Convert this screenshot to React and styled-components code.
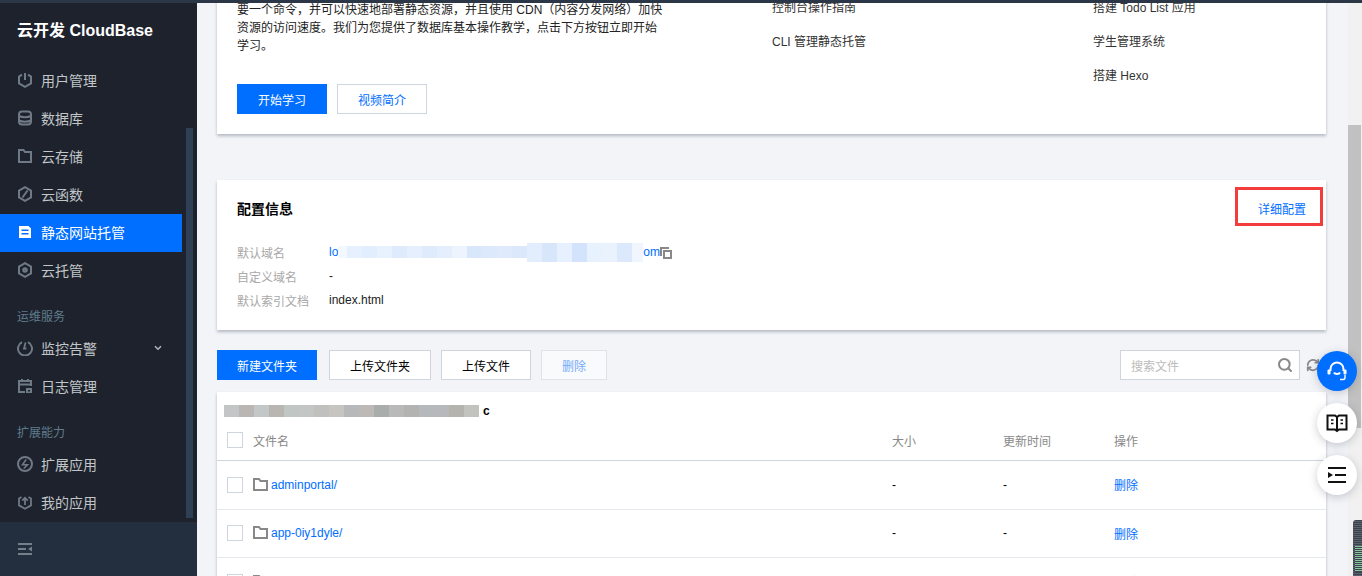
import React from 'react';
import styled, { createGlobalStyle } from 'styled-components';
import { Search, RefreshCw } from 'lucide-react';

const GlobalStyle = createGlobalStyle`
  html, body {
    margin: 0;
    height: 576px;
    overflow: hidden;
    background: #f2f4f8;
    font-family: "Liberation Sans", "Noto Sans CJK SC", sans-serif;
    font-size: 12px;
    color: #000;
  }
  * { box-sizing: border-box; }
`;

const Page = styled.div`
  display: flex;
  flex-direction: column;
  height: 576px;
`;

const TopStrip = styled.div`
  height: 3px;
  flex: none;
  background: #2b3647;
`;

const Body = styled.div`
  display: flex;
  flex: 1;
  min-height: 0;
`;

/* sidebar */
const Sidebar = styled.aside`
  position: relative;
  width: 197px;
  flex: none;
  display: flex;
  flex-direction: column;
  background: #1e222d;
`;

const Brand = styled.div`
  height: 59px;
  padding: 18px 0 0 17px;
  font-size: 16px;
  line-height: 20px;
  font-weight: 700;
  color: #fff;
`;

const Nav = styled.nav`
  flex: 1;
  padding-right: 15px;
`;

const NavItem = styled.div`
  display: flex;
  align-items: center;
  height: 38px;
  padding: 0 0 2px 17px;
  font-size: 14px;
  color: ${(p) => (p.$active ? '#fff' : '#c1c6c8')};
  background: ${(p) => (p.$active ? '#006eff' : 'transparent')};

  svg.nav-icon {
    width: 16px;
    height: 16px;
    margin-right: 8px;
    flex: none;
    color: ${(p) => (p.$active ? '#fff' : '#6e7a85')};
  }
`;

const Caret = styled.svg`
  width: 8px;
  height: 6px;
  margin-left: 57px;
  color: #b4b9bd;
`;

const SectionLabel = styled.div`
  height: 40px;
  padding: 18px 0 0 17px;
  line-height: 18px;
  color: #5e7c8c;
`;

const SideThumb = styled.div`
  position: absolute;
  left: 186px;
  top: 125px;
  width: 7px;
  height: 390px;
  background: #2f3f56;
`;

const SideFooter = styled.div`
  height: 54px;
  flex: none;
  display: flex;
  align-items: center;
  padding-left: 18px;
  background: #232e3e;
  color: #76808b;

  svg {
    width: 14px;
    height: 12px;
  }
`;

/* main area */
const Main = styled.main`
  position: relative;
  flex: 1;
  min-width: 0;
  overflow: hidden;
`;

const Content = styled.div`
  margin-top: -23px;
  padding: 0 36px 0 20px;
`;

const Card = styled.section`
  position: relative;
  background: #fff;
  box-shadow: 0 2px 3px 0 rgba(54, 58, 80, 0.32);
`;

const GuideCard = styled(Card)`
  display: grid;
  grid-template-columns: 535px 321px 1fr;
  padding: 19px 20px 20px;
  margin-bottom: 46px;
`;

const Para = styled.p`
  margin: 2px 0 29px;
  width: 428px;
  line-height: 18px;
  color: #222;
`;

const ButtonRow = styled.div`
  display: flex;
  gap: 10px;
`;

const Button = styled.button`
  width: ${(p) => p.$w || 90}px;
  height: 30px;
  padding: 0;
  font: inherit;
  border: 1px solid ${(p) => (p.$primary ? '#006eff' : '#cfd5de')};
  background: ${(p) => (p.$primary ? '#006eff' : '#fff')};
  color: ${(p) => (p.$primary ? '#fff' : p.$plain ? '#000' : '#006eff')};
  opacity: ${(p) => (p.$disabled ? 0.55 : 1)};
`;

const GuideList = styled.div`
  display: flex;
  flex-direction: column;
  gap: 16px;
  line-height: 18px;
  color: #333;
`;

const ConfigCard = styled(Card)`
  padding: 17px 20px 18px;
  margin-bottom: 20px;
`;

const CardHead = styled.div`
  display: flex;
  justify-content: space-between;
  align-items: center;
  height: 22px;
  margin-bottom: 21px;
`;

const CardTitle = styled.h3`
  margin: 0;
  font-size: 14px;
  font-weight: 700;
`;

const Link = styled.a`
  color: #006eff;
  text-decoration: none;
`;

const Callout = styled.div`
  position: absolute;
  top: 7px;
  right: 3px;
  width: 88px;
  height: 39px;
  border: 3px solid #f33c3c;
`;

const InfoRow = styled.div`
  display: flex;
  align-items: center;
  height: 24px;
`;

const InfoLabel = styled.span`
  width: 92px;
  color: #a8a8a8;
`;

const InfoValue = styled.span`
  display: inline-flex;
  align-items: center;
  color: #222;
`;

const Smudge = styled.span`
  display: inline-flex;
  align-items: center;
  margin-right: ${(p) => p.$gap || 0}px;
`;

const SmudgeBlock = styled.i`
  display: block;
  width: ${(p) => p.$w}px;
  height: ${(p) => p.$h}px;
  background: ${(p) => p.$c};
`;

const CopyIcon = styled.svg`
  width: 12px;
  height: 12px;
  margin-top: 2px;
  color: #888;
`;

const Toolbar = styled.div`
  display: flex;
  align-items: center;
  margin-bottom: 12px;
`;

const ToolButtons = styled.div`
  display: flex;
  gap: 10px;

  button:first-child {
    margin-right: 2px;
  }
`;

const SearchBox = styled.div`
  display: flex;
  align-items: center;
  justify-content: space-between;
  width: 180px;
  height: 30px;
  margin-left: auto;
  padding: 0 6px 0 10px;
  background: #fff;
  border: 1px solid #cfd5de;
  color: #bbb;

  svg {
    width: 16px;
    height: 16px;
    color: #888;
  }
`;

const Refresh = styled(RefreshCw)`
  width: 14px;
  height: 14px;
  margin: 0 6px;
  color: #888;
  flex: none;
`;

const TableCard = styled(Card)`
  height: 300px;
`;

const PathRow = styled.div`
  display: flex;
  align-items: center;
  height: 32px;
  padding: 6px 0 0 7px;
  font-weight: 700;
`;

const Row = styled.div`
  display: grid;
  grid-template-columns: 26px 639px 111px 111px 1fr;
  align-items: center;
  height: ${(p) => (p.$head ? 37 : 48.5)}px;
  padding: ${(p) => (p.$head ? '0 0 4px 10px' : '0 0 0 10px')};
  border-bottom: 1px solid ${(p) => (p.$head ? '#cfd5de' : '#e5e8ed')};
  color: ${(p) => (p.$head ? '#888' : '#000')};
`;

const Check = styled.span`
  display: block;
  width: 16px;
  height: 16px;
  background: #fff;
  border: 1px solid #cfd5de;
`;

const FileName = styled.span`
  display: flex;
  align-items: center;
  gap: 3px;
  color: #006eff;

  svg {
    width: 15px;
    height: 14px;
    color: #888;
    margin-top: -2px;
  }
`;

const ScrollTrack = styled.div`
  position: absolute;
  top: 0;
  right: 0;
  bottom: 0;
  width: 14px;
  background: #f1f1f1;
`;

const ScrollThumb = styled.div`
  position: absolute;
  top: 122px;
  left: 0;
  width: 13px;
  height: 303px;
  background: #c1c1c1;
`;

const FloatStack = styled.div`
  position: absolute;
  top: 348px;
  right: 5px;
  display: flex;
  flex-direction: column;
  gap: 12px;
`;

const FloatButton = styled.div`
  display: flex;
  align-items: center;
  justify-content: center;
  width: 40px;
  height: 40px;
  border-radius: 50%;
  color: ${(p) => (p.$primary ? '#fff' : '#111')};
  background: ${(p) => (p.$primary ? '#006eff' : '#fff')};
  box-shadow: 0 2px 8px rgba(54, 58, 80, 0.25);

  svg {
    width: 22px;
    height: 22px;
  }
`;

const Meter = styled.div`
  position: absolute;
  top: 517px;
  right: 0;
  width: 9px;
  height: 56px;
  border-radius: 3px 0 0 0;
  background: repeating-linear-gradient(180deg, #3d4450 0 1px, #5a616d 1px 2px);
`;

const MeterFill = styled.div`
  position: absolute;
  left: 2px;
  right: 0;
  bottom: 4px;
  height: 26px;
  background: repeating-linear-gradient(180deg, #86c9a0 0 1px, #3d4450 1px 2px);
`;

/* icons */
const NavSvg = ({ children }) => (
  <svg className="nav-icon" viewBox="0 0 16 16" fill="none" stroke="currentColor" strokeWidth="2">
    {children}
  </svg>
);

const Hexagon = () => <path d="M8 1.2 14 4.6v6.8l-6 3.4-6-3.4V4.6z" />;

const icons = {
  user: (
    <NavSvg>
      <path d="M5 2.6 2 4.6v6.8l6 3.4 6-3.4V4.6l-3-2" />
      <path d="M8 1v7" />
    </NavSvg>
  ),
  db: (
    <NavSvg>
      <rect x="2" y="1.5" width="12" height="13" rx="3" />
      <path d="M2 6c3 1.6 9 1.6 12 0M2 10.5c3 1.6 9 1.6 12 0" />
    </NavSvg>
  ),
  folder: (
    <NavSvg>
      <path d="M2 2h4.5l1.5 2h6v10H2z" />
    </NavSvg>
  ),
  func: (
    <NavSvg>
      <Hexagon />
      <path d="M10.5 4.5 5.5 11.5" />
    </NavSvg>
  ),
  doc: (
    <svg className="nav-icon" viewBox="0 0 16 16">
      <path
        fill="currentColor"
        fillRule="evenodd"
        d="M2 2h9.5L14 4.5V14H2zM4.5 5.5v1.5h7V5.5zM4.5 9v1.5h7V9z"
      />
    </svg>
  ),
  tcb: (
    <NavSvg>
      <Hexagon />
      <circle cx="8" cy="8" r="1.6" strokeWidth="2.4" />
    </NavSvg>
  ),
  monitor: (
    <NavSvg>
      <path d="M5 2.2a7 7 0 1 0 6 0" />
      <path d="M8.6 2.5 7 8.5h2.4" strokeWidth="1.8" />
    </NavSvg>
  ),
  log: (
    <svg className="nav-icon" viewBox="0 0 16 16" fill="none" stroke="currentColor" strokeWidth="2">
      <path d="M8 14H2V3h12v5M5 1v3M11 1v3M2 6.5h12" />
      <rect x="9" y="10" width="6" height="5" fill="currentColor" stroke="none" />
      <rect x="11" y="12" width="2" height="1.5" fill="#1e222d" stroke="none" />
    </svg>
  ),
  ext: (
    <NavSvg>
      <circle cx="8" cy="8" r="7" />
      <path d="M9.2 3.5 5.5 8.7h5L6.8 12.5" strokeWidth="1.6" />
    </NavSvg>
  ),
  app: (
    <NavSvg>
      <path d="M4.5 3 2 4.6v6.8l6 3.4 6-3.4V4.6L11.5 3" strokeWidth="1.8" />
      <path d="M8 11V4M5.2 6.6 8 3.8l2.8 2.8" strokeWidth="1.8" />
    </NavSvg>
  ),
};

const FolderIcon = () => (
  <svg viewBox="0 0 15 14" fill="none" stroke="currentColor" strokeWidth="2">
    <path d="M1 2h5l1.5 2H14v9H1z" />
  </svg>
);

const smudgeBlue = [
  ['#f3f7fe', 9], ['#e6f0fe', 15], ['#e2edfd', 15], ['#e8f1fe', 15], ['#dfeafc', 15], ['#e5effd', 15],
  ['#dfeafc', 15], ['#e4eefd', 15], ['#eef4fd', 15], ['#d9e7fb', 15], ['#dce9fc', 15], ['#dfeafc', 15],
  ['#dbe8fc', 15], ['#e2edfd', 15], ['#d8e6fb', 15], ['#e6f0fe', 15], ['#d3e3fb', 15], ['#e8f1fe', 15],
  ['#eaf2fe', 15], ['#dce9fc', 15], ['#f0f5fe', 11],
];

const smudgeGrey = [
  '#c3c6c6', '#b9b6b4', '#c4c7c7', '#b9b6b2', '#bfc6c4', '#c3c6c4', '#c0c1bf', '#c6c5c2', '#b7b8b9',
  '#bdb9b6', '#a9aeac', '#b9b9b9', '#b3b3b2', '#b5b9bb', '#b6b8b9', '#b4b3ae', '#c2c2bf',
];

const navTop = [
  ['user', '用户管理'],
  ['db', '数据库'],
  ['folder', '云存储'],
  ['func', '云函数'],
  ['doc', '静态网站托管', true],
  ['tcb', '云托管'],
];

const files = ['adminportal/', 'app-0iy1dyle/', 'assets/'];

export default function App() {
  return (
    <Page>
      <GlobalStyle />
      <TopStrip />
      <Body>
        <Sidebar>
          <Brand>云开发 CloudBase</Brand>
          <Nav>
            {navTop.map(([icon, label, active]) => (
              <NavItem key={label} $active={active}>
                {icons[icon]}
                {label}
              </NavItem>
            ))}
            <SectionLabel>运维服务</SectionLabel>
            <NavItem>
              {icons.monitor}
              监控告警
              <Caret viewBox="0 0 8 6" fill="none" stroke="currentColor" strokeWidth="1.5">
                <path d="M1 1.2 4 4.2l3-3" />
              </Caret>
            </NavItem>
            <NavItem>
              {icons.log}
              日志管理
            </NavItem>
            <SectionLabel>扩展能力</SectionLabel>
            <NavItem>
              {icons.ext}
              扩展应用
            </NavItem>
            <NavItem>
              {icons.app}
              我的应用
            </NavItem>
          </Nav>
          <SideThumb />
          <SideFooter>
            <svg viewBox="0 0 14 12" fill="currentColor">
              <path d="M0 0h14v2H0zM0 5h8v2H0zM0 10h14v2H0zM14 3.5v5L10 6z" />
            </svg>
          </SideFooter>
        </Sidebar>

        <Main>
          <Content>
            <GuideCard>
              <div>
                <Para>
                  要一个命令，并可以快速地部署静态资源，并且使用 CDN（内容分发网络）加快资源的访问速度。我们为您提供了数据库基本操作教学，点击下方按钮立即开始学习。
                </Para>
                <ButtonRow>
                  <Button $primary>开始学习</Button>
                  <Button>视频简介</Button>
                </ButtonRow>
              </div>
              <GuideList>
                <span>控制台操作指南</span>
                <span>CLI 管理静态托管</span>
              </GuideList>
              <GuideList>
                <span>搭建 Todo List 应用</span>
                <span>学生管理系统</span>
                <span>搭建 Hexo</span>
              </GuideList>
            </GuideCard>

            <ConfigCard>
              <CardHead>
                <CardTitle>配置信息</CardTitle>
                <Link>详细配置</Link>
              </CardHead>
              <Callout />
              <InfoRow>
                <InfoLabel>默认域名</InfoLabel>
                <InfoValue>
                  <Link>lo</Link>
                  <Smudge>
                    {smudgeBlue.map(([c, w], i) => (
                      <SmudgeBlock key={i} $c={c} $w={w} $h={i < 13 ? 12 : 19} />
                    ))}
                  </Smudge>
                  <Link>om</Link>
                  <CopyIcon viewBox="0 0 12 12" fill="none" stroke="currentColor" strokeWidth="2">
                    <path d="M1 9V1h8" />
                    <rect x="4" y="4" width="7" height="7" />
                  </CopyIcon>
                </InfoValue>
              </InfoRow>
              <InfoRow>
                <InfoLabel>自定义域名</InfoLabel>
                <InfoValue>-</InfoValue>
              </InfoRow>
              <InfoRow>
                <InfoLabel>默认索引文档</InfoLabel>
                <InfoValue>index.html</InfoValue>
              </InfoRow>
            </ConfigCard>

            <Toolbar>
              <ToolButtons>
                <Button $primary $w={100}>新建文件夹</Button>
                <Button $plain $w={102}>上传文件夹</Button>
                <Button $plain $w={90}>上传文件</Button>
                <Button $disabled $w={66}>删除</Button>
              </ToolButtons>
              <SearchBox>
                搜索文件
                <Search strokeWidth={3} />
              </SearchBox>
              <Refresh strokeWidth={3} />
            </Toolbar>

            <TableCard>
              <PathRow>
                <Smudge $gap={4}>
                  {smudgeGrey.map((c, i) => (
                    <SmudgeBlock key={i} $c={c} $w={15} $h={12} />
                  ))}
                </Smudge>
                c
              </PathRow>
              <Row $head>
                <Check />
                <span>文件名</span>
                <span>大小</span>
                <span>更新时间</span>
                <span>操作</span>
              </Row>
              {files.map((name) => (
                <Row key={name}>
                  <Check />
                  <FileName>
                    <FolderIcon />
                    {name}
                  </FileName>
                  <span>-</span>
                  <span>-</span>
                  <Link>删除</Link>
                </Row>
              ))}
            </TableCard>
          </Content>

          <ScrollTrack>
            <ScrollThumb />
          </ScrollTrack>
          <Meter>
            <MeterFill />
          </Meter>
          <FloatStack>
            <FloatButton $primary>
              <svg viewBox="0 0 22 22" fill="none" stroke="currentColor" strokeWidth="2">
                <path d="M4.5 11V9a6.5 6.5 0 0 1 13 0v2" />
                <rect x="1.5" y="9.5" width="3" height="5" rx="1" fill="currentColor" stroke="none" />
                <rect x="17.5" y="9.5" width="3" height="5" rx="1" fill="currentColor" stroke="none" />
                <path d="M8 12.5c1 2 5 2 6 0" />
                <path d="M19 15v2.5a2 2 0 0 1-2 2h-3" strokeWidth="1.4" />
              </svg>
            </FloatButton>
            <FloatButton>
              <svg viewBox="0 0 22 22" fill="none" stroke="currentColor" strokeWidth="2">
                <path d="M1.5 3.5H9L11 5l2-1.5h7.5v14H13L11 19l-2-1.5H1.5zM11 5v14" />
                <path d="M5 8h2.5M5 11.5h2.5M14.5 8H17M14.5 11.5H17" strokeWidth="1.5" />
              </svg>
            </FloatButton>
            <FloatButton>
              <svg viewBox="0 0 22 22" fill="currentColor">
                <path d="M2 3h18v2H2zM9 10h11v2H9zM2 17h18v2H2zM2 8l5 3-5 3z" />
              </svg>
            </FloatButton>
          </FloatStack>
        </Main>
      </Body>
    </Page>
  );
}
